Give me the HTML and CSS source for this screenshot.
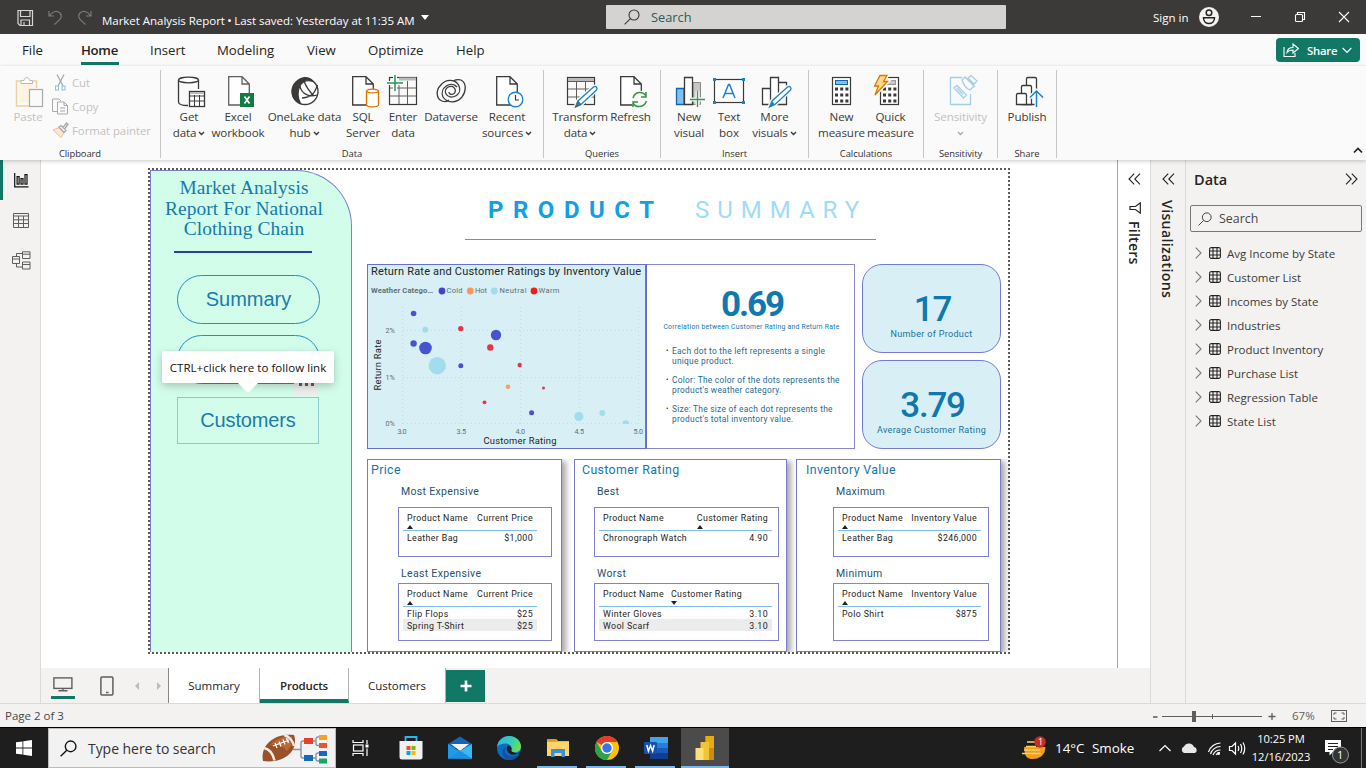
FILE: index.html
```html
<!DOCTYPE html>
<html lang="en">
<head>
<meta charset="utf-8">
<title>Market Analysis Report</title>
<link rel="stylesheet" href="styles.css">
</head>
<body>
<svg class="defs" width="0" height="0">
  <defs>
    <symbol id="doc" viewBox="0 0 22 30"><path d="M.7 .7H14L21.3 8V29H.7ZM14 .7V8H21.3" fill="#fff" stroke="#3b3a39" stroke-width="1.3"/></symbol>
    <symbol id="tbl" viewBox="0 0 12 12"><rect x=".6" y=".6" width="10.8" height="10.8" rx="1.6"/><path d="M.6 4H11.4M.6 8H11.4M4 .6V11.4M8 .6V11.4"/></symbol>
    <symbol id="chev" viewBox="0 0 7 12"><path d="M.7 .7L6 6L.7 11.3"/></symbol>
    <symbol id="dbl" viewBox="0 0 13 12"><path d="M6.2 .7L1 6L6.2 11.3M12 .7L6.8 6L12 11.3"/></symbol>
    <symbol id="lens" viewBox="0 0 16 16"><circle cx="10" cy="6" r="5"/><path d="M6.4 9.6L.6 15.4"/></symbol>
    <symbol id="down" viewBox="0 0 7 5"><path d="M1 1L3.5 3.5L6 1"/></symbol>
  </defs>
</svg>
<div class="app">
  <header class="titlebar">
    <svg class="quick" width="84" height="20" viewBox="14 7 84 20" fill="none">
      <path d="M18 10.500H32.500V25.500H20L18 23.500ZM20.500 10.500V16.500H30V10.500M21 25V20H29.500V25M24 22V25" stroke="#d6d6d6" stroke-width="1.200"/>
      <path d="M49 11V16H54M49.500 16C53 10.500 57 10.500 60 13C63 16.500 61 19 54.500 24.500" stroke="#7b7a79" stroke-width="1.200"/>
      <path d="M91 11V16H86M90.500 16C87 10.500 83 10.500 80 13C77 16.500 79 19 85.500 24.500" stroke="#7b7a79" stroke-width="1.200"/>
    </svg>
    <span class="doc-name">Market Analysis Report <b>•</b> Last saved: Yesterday at 11:35 AM</span>
    <i class="caret"></i>
    <div class="top-search"><svg class="ico-line" width="16" height="16"><use href="#lens"/></svg><span>Search</span></div>
    <span class="signin">Sign in</span>
    <svg class="user" width="20" height="20" viewBox="0 0 20 20"><circle cx="10" cy="10" r="10" fill="#f3f2f1"/><g fill="none" stroke="#222" stroke-width="1.500"><circle cx="10" cy="5.700" r="2.800"/><path d="M4.500 10.800H15.500C15.500 18.500 4.500 18.500 4.500 10.800Z"/></g></svg>
    <svg class="winbtns" width="104" height="14" viewBox="1248 11 104 14" fill="none" stroke="#fff" stroke-width="1.100"><path d="M1251 17.500H1261M1339 13L1349 23M1349 13L1339 23"/><rect x="1295.500" y="15.500" width="7" height="7" rx="1"/><path d="M1297.500 15V13.500H1304.500V20.500H1303"/></svg>
  </header>

  <nav class="menu">
    <span class="m-file">File</span><span class="m-home active">Home</span><span class="m-insert">Insert</span><span class="m-model">Modeling</span><span class="m-view">View</span><span class="m-opt">Optimize</span><span class="m-help">Help</span>
    <button class="share"><svg width="16" height="16" viewBox="0 0 16 16" fill="none" stroke="#fff" stroke-width="1.100"><path d="M1 5V14.500H12V11M4 10.500C4.500 6.500 7 5.500 10 5.500V2L15.500 6.500L10 11V8C7 8 5.500 8.500 4 10.500Z"/></svg>Share<svg width="10" height="7" viewBox="0 0 10 7" fill="none" stroke="#fff" stroke-width="1.200"><path d="M.7 1L5 5.500L9.300 1"/></svg></button>
  </nav>

  <section class="ribbon">
    <div class="group g-clip">
      <div class="items">
        <div class="btn off paste"><svg width="38" height="36" viewBox="10 74 38 36" fill="none"><path d="M22 81H17.500V106H30M34 81H37.500V88" stroke="#f0cfa0" stroke-width="1.500"/><path d="M20.500 83H34.500V89H30V103H20.500Z" fill="#fcf3e0"/><path d="M22 83.500V80.500H25C25.500 76.500 30 76.500 30.500 80.500H33.500V83.500Z" fill="#fff" stroke="#b9b9b9"/><rect x="30.500" y="89.500" width="13" height="17" fill="#fafafa" stroke="#a9a9a9" stroke-width="1.200"/></svg><span>Paste</span></div>
        <div class="clip-list off">
          <div><svg width="17" height="17" viewBox="0 0 17 17" fill="none" stroke="#a9a9a9"><path d="M5 .5L11 12M12 .5L6 12" stroke-width="1.300"/><rect x="3.500" y="12" width="3" height="4" stroke="#8cc1e4"/><rect x="10" y="12" width="3" height="4" stroke="#8cc1e4"/></svg>Cut</div>
          <div><svg width="17" height="17" viewBox="0 0 17 17" fill="none" stroke="#a9a9a9"><path d="M5 13.500H.5V1H7L9 3M5.500 4H12L15.500 7.500V16H5.500ZM12 4V7.500H15.500M8 10H13M8 13H13"/></svg>Copy</div>
          <div><svg width="17" height="17" viewBox="0 0 17 17" fill="none" stroke="#a9a9a9"><path d="M1 8L7 5.500L12 11L9 15.500Z" fill="#fbe6cd" stroke="#eac196"/><path d="M7 5L9 3.500L14 8.500L12 10.500ZM11 5.500L14.500 1L16 2.500L12.500 7" stroke-width="1.300"/></svg>Format painter</div>
        </div>
      </div>
      <div class="cap">Clipboard</div>
    </div>

    <div class="group g-data">
      <div class="items">
        <div class="btn" style="width:42px"><svg width="38" height="36" viewBox="170 74 38 36" fill="none" stroke="#3b3a39" stroke-width="1.300"><path d="M178.500 80V102C178.500 104 182 105.500 188 105.500M198.500 80V89"/><ellipse cx="188.500" cy="80" rx="10" ry="2.800" fill="#fff"/><rect x="189.500" y="91.500" width="15" height="15" fill="#fff"/><path d="M190 93H204" stroke="#bbb" stroke-width="2"/><path d="M189.500 96H204.500M189.500 101H204.500M194.500 95V106M199.500 95V106" stroke-width="1"/></svg><span>Get<br>data<svg class="dn" width="7" height="5"><use href="#down"/></svg></span></div>
        <div class="btn" style="width:56px"><svg width="38" height="36" viewBox="219 74 38 36"><use href="#doc" x="228" y="76" width="22" height="30" opacity=".8"/><rect x="240" y="93" width="14" height="14" fill="#107c41"/><path d="M244.500 96.500L249.500 103.500M249.500 96.500L244.500 103.500" stroke="#fff" stroke-width="1.700"/></svg><span>Excel<br>workbook</span></div>
        <div class="btn" style="width:77px"><svg width="38" height="36" viewBox="286 74 38 36" fill="none" stroke="#3b3a39" stroke-width="1.300"><circle cx="305" cy="91.500" r="13" fill="#fff"/><path d="M297 81.500C302 76.500 309 76.500 313 81.500C306 79 302 82 299.500 86.500C297 93 298 99 300.500 103.500C291.500 100 289.500 89 297 81.500Z" fill="#3b3a39"/><path d="M300 86C301 92 307 98 317 95M304 81C306 87 309 91 314 96M317.500 85C315 92 313 97 302 98"/></svg><span>OneLake data<br>hub<svg class="dn" width="7" height="5"><use href="#down"/></svg></span></div>
        <div class="btn" style="width:40px"><svg width="38" height="36" viewBox="344 74 38 36"><use href="#doc" x="352" y="76" width="22" height="30"/><path d="M366.500 91V105C368 107.500 377 107.500 378.500 105V91C377 88.500 368 88.500 366.500 91C368 93.500 377 93.500 378.500 91" fill="#fff" stroke="#db7500" stroke-width="1.400"/></svg><span>SQL<br>Server</span></div>
        <div class="btn" style="width:40px"><svg width="38" height="36" viewBox="384 74 38 36" fill="none" stroke="#605e5c"><rect x="389.500" y="77.500" width="27" height="27" stroke="#3b3a39" stroke-width="1.200"/><path d="M399 79H416" stroke="#bbb" stroke-width="3"/><path d="M390 88H416M390 96H416M399 81V104M407.500 81V104"/><path d="M387 83H403M395 75V91" stroke="#fff" stroke-width="4"/><path d="M387 83H403M395 75V91" stroke="#1f9b51" stroke-width="1.500"/></svg><span>Enter<br>data</span></div>
        <div class="btn" style="width:56px"><svg width="38" height="36" viewBox="432 74 38 36" fill="none" stroke="#3b3a39" stroke-width="1.300"><path d="M442 101C436 99 436 90 440 86C446 78 456 79 459 86C463 95 450 101 446 94C443 88 452 83 455 89C457 95 449 96 449 92M461 80C467 83 466 92 462 97C456 104 447 103 443 97C439 88 451 80 457 87M442 101C445 102 448 101 449 100M461 80C458 79 455 80 453 81"/></svg><span>Dataverse</span></div>
        <div class="btn" style="width:56px"><svg width="38" height="36" viewBox="488 74 38 36"><use href="#doc" x="496" y="76" width="22" height="30"/><circle cx="515.500" cy="99.500" r="7.300" fill="#fff" stroke="#1b83cb" stroke-width="1.400"/><path d="M515.500 95V100H519" fill="none" stroke="#3b3a39" stroke-width="1.200"/></svg><span>Recent<br>sources<svg class="dn" width="7" height="5"><use href="#down"/></svg></span></div>
      </div>
      <div class="cap">Data</div>
    </div>

    <div class="group g-query">
      <div class="items">
        <div class="btn" style="width:58px"><svg width="38" height="36" viewBox="561 74 38 36" fill="none" stroke="#605e5c"><rect x="567.500" y="77.500" width="27" height="27" stroke="#3b3a39" stroke-width="1.200"/><path d="M568 79.500H594" stroke="#bbb" stroke-width="3"/><path d="M568 81.500H594M568 89H594M568 97H594M576.500 82V104M585.500 82V104"/><path d="M575.500 107L578 101L593.500 87C596 85.500 598 88 596.500 90L581 104.500Z" fill="#fff" stroke="#fafafa" stroke-width="4"/><path d="M575.500 107L578 101L593.500 87C596 85.500 598 88 596.500 90L581 104.500Z" fill="#fff" stroke="#1b83cb" stroke-width="1.300"/><path d="M575.500 107L578 101L581 104.500Z" fill="#1b83cb"/></svg><span>Transform<br>data<svg class="dn" width="7" height="5"><use href="#down"/></svg></span></div>
        <div class="btn" style="width:43px"><svg width="38" height="36" viewBox="611 74 38 36" fill="none"><use href="#doc" x="619" y="76" width="22" height="30"/><circle cx="638.500" cy="99.500" r="9" fill="#fafafa"/><path d="M632 98C634 91 642 91 645 96M645 92V97H640M645.500 101C643 108 635 108 632 103M632 107V102H637" stroke="#37914c" stroke-width="1.500"/></svg><span>Refresh</span></div>
      </div>
      <div class="cap">Queries</div>
    </div>

    <div class="group g-insert">
      <div class="items">
        <div class="btn" style="width:40px"><svg width="38" height="36" viewBox="670 74 38 36" fill="none"><path d="M676.500 88.500H684V104.500H676.500Z" fill="#83beec" stroke="#1064b0" stroke-width="1.300"/><path d="M693 82.500H700.500V104.500H693Z" fill="#c8c6c4" stroke="#8a8886"/><path d="M684.500 77.500H692.500V104.500H684.500Z" fill="#fff" stroke="#3b3a39" stroke-width="1.300"/><path d="M697.500 91V107M690 99.500H705" stroke="#fafafa" stroke-width="4"/><path d="M697.500 91V107M690 99.500H705" stroke="#2f9a50" stroke-width="1.300"/></svg><span>New<br>visual</span></div>
        <div class="btn" style="width:40px"><svg width="38" height="36" viewBox="710 74 38 36" fill="none"><rect x="714.500" y="79.500" width="29" height="23" fill="#fff" stroke="#3b3a39" stroke-width="1.200"/><path d="M713 78h3v3h-3zM742 78h3v3h-3zM713 101h3v3h-3zM742 101h3v3h-3z" fill="#1b83cb"/><path d="M723 98L728.500 84.500H729.500L735 98M725 93.500H733" stroke="#1b83cb" stroke-width="1.500"/></svg><span>Text<br>box</span></div>
        <div class="btn" style="width:51px"><svg width="38" height="36" viewBox="755 74 38 36" fill="none" stroke="#3b3a39" stroke-width="1.300"><path d="M761.500 88.500H769.500V104.500H761.500ZM777.500 82.500H785.500V104.500H777.500ZM769.500 77.500H777.500V104.500H769.500Z" fill="#fff"/><path d="M768.500 107L771 101L786.500 87C789 85.500 791 88 789.500 90L774 104.500Z" fill="#fff" stroke="#fafafa" stroke-width="4"/><path d="M768.500 107L771 101L786.500 87C789 85.500 791 88 789.500 90L774 104.500Z" fill="#fff" stroke="#1b83cb"/><path d="M768.500 107L771 101L774 104.500Z" fill="#1b83cb" stroke="none"/></svg><span>More<br>visuals<svg class="dn" width="7" height="5"><use href="#down"/></svg></span></div>
      </div>
      <div class="cap">Insert</div>
    </div>

    <div class="group g-calc">
      <div class="items">
        <div class="btn" style="width:49px"><svg width="38" height="36" viewBox="822 74 38 36"><rect x="831.500" y="77.500" width="18" height="27" fill="#fff" stroke="#3b3a39" stroke-width="1.200"/><rect x="834.500" y="80.500" width="12" height="4" fill="#83beec" stroke="#1064b0"/><path d="M834 89H848M834 95H848M834 101H848" stroke="#3b3a39" stroke-width="3" stroke-dasharray="3 2.200"/></svg><span>New<br>measure</span></div>
        <div class="btn" style="width:49px"><svg width="38" height="36" viewBox="872 74 38 36"><rect x="880.500" y="77.500" width="18" height="27" fill="#fff" stroke="#3b3a39" stroke-width="1.200"/><rect x="885.500" y="80.500" width="10" height="4" fill="#c8c6c4" stroke="#999"/><path d="M883 89H897M883 95H897M883 101H897" stroke="#3b3a39" stroke-width="3" stroke-dasharray="3 2.200"/><path d="M880 75.500H887L883.500 81.500H887.500L875 95L878.500 86H874.500Z" fill="#ffd55f" stroke="#fafafa" stroke-width="4"/><path d="M880 75.500H887L883.500 81.500H887.500L875 95L878.500 86H874.500Z" fill="#ffd88a" stroke="#d97a00" stroke-width="1.300"/></svg><span>Quick<br>measure</span></div>
      </div>
      <div class="cap">Calculations</div>
    </div>

    <div class="group g-sens">
      <div class="items">
        <div class="btn off" style="width:73px"><svg width="38" height="36" viewBox="941 74 38 36" fill="none" stroke="#a5cfe8" stroke-width="1.300"><path d="M961 77.500H949.500V104.500H969.500V94"/><path d="M953 88L956 85.500L965.500 95L962.500 98ZM956 88L962 94.500M961 80L964 77L973 86L969 90C966 89 963 86 961 80ZM967 78L970 75.500L976 81L973 84ZM965 78L974 87"/></svg><span>Sensitivity<br><svg class="dn" width="7" height="5"><use href="#down"/></svg></span></div>
      </div>
      <div class="cap">Sensitivity</div>
    </div>

    <div class="group g-share">
      <div class="items">
        <div class="btn" style="width:58px"><svg width="38" height="36" viewBox="1008 74 38 36" fill="#fff" stroke="#3b3a39" stroke-width="1.300"><path d="M1026.500 104.500V79Q1026.500 77.500 1028 77.500H1035Q1036.500 77.500 1036.500 79V104.500Z"/><path d="M1021.500 104.500V87Q1021.500 85.500 1023 85.500H1030Q1031.500 85.500 1031.500 87V104.500Z"/><path d="M1016.500 104.500V95Q1016.500 93.500 1018 93.500H1025Q1026.500 93.500 1026.500 95V104.500Z"/><path d="M1036.500 107V92M1030 97.500L1036.500 91L1043 97.500" fill="none" stroke="#fafafa" stroke-width="4"/><path d="M1036.500 107V92M1030 97.500L1036.500 91L1043 97.500" fill="none" stroke="#1b83cb" stroke-width="1.500"/></svg><span>Publish</span></div>
      </div>
      <div class="cap">Share</div>
    </div>
    <svg class="collapse" width="10" height="7" viewBox="0 0 10 7" fill="none" stroke="#222" stroke-width="1.700"><path d="M1 5.500L5 1.500L9 5.500"/></svg>
  </section>

  <div class="body">
    <aside class="rail">
      <div class="rail-on"><svg width="15" height="15" viewBox="0 0 15 15" fill="none" stroke="#111" stroke-width="1.200"><path d="M.7 0V13.800H14.500"/><rect x="3.100" y="3.600" width="2" height="7.500"/><rect x="7" y="5.600" width="2" height="5.500"/><rect x="11" y="1.600" width="2" height="9.500"/></svg></div>
      <div><svg width="16" height="15" viewBox="0 0 16 15" fill="none" stroke="#605e5c"><path d="M.5 .5H15.500V14.500H.5ZM.5 3H15.500M.5 6.800H15.500M.5 10.500H15.500M5.500 3V14.500M10.500 3V14.500"/></svg></div>
      <div><svg width="19" height="19" viewBox="0 0 19 19" fill="none" stroke="#605e5c"><path d="M.5 5.500H7.500V12.500H.5ZM.5 8H7.500M10.500 .8H18V7.500H10.500ZM10.500 3.200H18M10.500 11H18V18H10.500ZM10.500 13.500H18M4.500 5.500V2.500H10.500M4.500 12.500V16H10.500"/></svg></div>
    </aside>

    <div class="center">
      <div class="stage">
        <div class="workspace">
          <div class="report">
            <div class="side">
              <h1>Market Analysis<br>Report For National<br>Clothing Chain</h1>
              <div class="rule"></div>
              <div class="pill">Summary</div>
              <div class="pill"></div>
              <div class="pill square">Customers
                <svg class="more" width="24" height="21" viewBox="0 0 24 21" fill="#605e5c"><path d="M5 8h3v3H5zM11 8h3v3h-3zM17 8h3v3h-3z"/></svg>
                <div class="tip">CTRL+click here to follow link</div>
              </div>
            </div>
            <div class="main">
              <div class="heading"><b>PRODUCT</b><span>SUMMARY</span></div>
              <div class="row-top">
                <svg class="chart" width="280" height="185" viewBox="367 264 280 185">
                  <rect x="367.500" y="264.500" width="278.500" height="184" fill="#d7eff5" stroke="#6670cc"/>
                  <path d="M646 264V449" stroke="#6670cc" stroke-width="2"/>
                  <g class="t-title"><text x="371" y="275" textLength="270">Return Rate and Customer Ratings by Inventory Value</text></g>
                  <g class="t-legend">
                    <text x="371" y="293" font-weight="bold" textLength="62">Weather Catego…</text>
                    <text x="446.500" y="293" textLength="16">Cold</text><text x="475" y="293" textLength="12">Hot</text><text x="499.500" y="293" textLength="27">Neutral</text><text x="538.500" y="293" textLength="21">Warm</text>
                  </g>
                  <circle cx="442" cy="291" r="3.400" fill="#3f46cf"/><circle cx="470.300" cy="291" r="3.400" fill="#fd9650"/><circle cx="494.300" cy="291" r="3.400" fill="#a0dcea"/><circle cx="534" cy="291" r="3.400" fill="#ee1c25"/>
                  <g stroke="#bfdce3" stroke-dasharray="1 3"><path d="M402.500 307V424M461.500 307V424M520.500 307V424M579.500 307V424M638.500 307V424M403 330.500H638M403 377.500H638M403 423.500H638"/></g>
                  <g class="t-axis">
                    <text x="385.500" y="333">2%</text><text x="385.500" y="380">1%</text><text x="385.500" y="426">0%</text>
                    <text x="397.500" y="434" textLength="9">3.0</text><text x="456.500" y="434" textLength="9.500">3.5</text><text x="515.500" y="434" textLength="9.500">4.0</text><text x="574.500" y="434" textLength="9.500">4.5</text><text x="633.500" y="434" textLength="9.500">5.0</text>
                  </g>
                  <g class="t-label"><text x="483.500" y="444" textLength="73">Customer Rating</text><text transform="translate(380.500 390.500) rotate(-90)" textLength="51">Return Rate</text></g>
                  <g fill="#4853d2"><circle cx="413.600" cy="313.500" r="2.800"/><circle cx="413.600" cy="343.500" r="3.200"/><circle cx="425.500" cy="348" r="6.300"/><circle cx="460.800" cy="365.700" r="2.500"/><circle cx="496" cy="335" r="5.200"/><circle cx="531.600" cy="412.700" r="2.500"/></g>
                  <g fill="#e83340"><circle cx="460.800" cy="328.600" r="2.700"/><circle cx="490.300" cy="347.500" r="3.200"/><circle cx="519.700" cy="365" r="2.200"/><circle cx="543.500" cy="388" r="1.500"/><circle cx="484.500" cy="402.300" r="1.900"/></g>
                  <circle cx="508" cy="386.700" r="2.300" fill="#f6a069"/>
                  <g fill="#a2dded"><circle cx="425.300" cy="329.700" r="3"/><circle cx="437.300" cy="365.700" r="8.700"/><circle cx="578.800" cy="416.500" r="4.600"/><circle cx="602.300" cy="413" r="2.900"/><path d="M622.500 424A3.300 3.300 0 1 1 629 424Z"/></g>
                </svg>
                <div class="info">
                  <div class="num">0.69</div>
                  <div class="corr">Correlation between Customer Rating and Return Rate</div>
                  <ul>
                    <li>Each dot to the left represents a single<br>unique product.</li>
                    <li>Color: The color of the dots represents the<br>product's weather category.</li>
                    <li>Size: The size of each dot represents the<br>product's total inventory value.</li>
                  </ul>
                </div>
                <div class="cards">
                  <div class="card"><div class="num wide">17</div><div class="lbl">Number of Product</div></div>
                  <div class="card"><div class="num wide">3.79</div><div class="lbl">Average Customer Rating</div></div>
                </div>
              </div>
              <div class="row-bottom">
                <div class="panel p-price">
                  <h2>Price</h2>
                  <h3>Most Expensive</h3>
                  <div class="tbox"><div class="th"><span class="up">Product Name</span><span>Current Price</span></div><div class="tr"><span>Leather Bag</span><span>$1,000</span></div></div>
                  <h3>Least Expensive</h3>
                  <div class="tbox tall"><div class="th"><span class="up">Product Name</span><span>Current Price</span></div><div class="tr"><span>Flip Flops</span><span>$25</span></div><div class="tr alt"><span>Spring T-Shirt</span><span>$25</span></div></div>
                </div>
                <div class="panel p-rating">
                  <h2>Customer Rating</h2>
                  <h3>Best</h3>
                  <div class="tbox"><div class="th"><span>Product Name</span><span class="up">Customer Rating</span></div><div class="tr"><span>Chronograph Watch</span><span>4.90</span></div></div>
                  <h3>Worst</h3>
                  <div class="tbox tall near"><div class="th"><span>Product Name</span><span class="dwn">Customer Rating</span></div><div class="tr"><span>Winter Gloves</span><span>3.10</span></div><div class="tr alt"><span>Wool Scarf</span><span>3.10</span></div></div>
                </div>
                <div class="panel p-inv">
                  <h2>Inventory Value</h2>
                  <h3>Maximum</h3>
                  <div class="tbox"><div class="th"><span class="up">Product Name</span><span>Inventory Value</span></div><div class="tr"><span>Leather Bag</span><span>$246,000</span></div></div>
                  <h3>Minimum</h3>
                  <div class="tbox tall"><div class="th"><span class="up">Product Name</span><span>Inventory Value</span></div><div class="tr"><span>Polo Shirt</span><span>$875</span></div></div>
                </div>
              </div>
            </div>
          </div>
        </div>
        <aside class="filters">
          <svg class="ico-line dark" width="13" height="12"><use href="#dbl"/></svg>
          <svg class="funnel" width="12" height="12" viewBox="0 0 12 12" fill="none" stroke="#252423" stroke-width="1.200"><path d="M11.300 .8V11.200L6.500 7.500H1V4.500H6.500Z"/></svg>
          <span>Filters</span>
        </aside>
      </div>
      <div class="pages">
        <div class="device on"><svg width="20" height="15" viewBox="0 0 20 15" fill="none" stroke="#605e5c" stroke-width="1.400"><rect x=".9" y=".9" width="18" height="10.500"/><path d="M10 11.500V13.500M5.500 13.800H14.500"/></svg></div>
        <div class="device"><svg width="14" height="20" viewBox="0 0 14 20" fill="none" stroke="#605e5c" stroke-width="1.500"><rect x=".9" y=".9" width="12" height="18.200" rx="1"/><path d="M6 16.500H8.500"/></svg></div>
        <svg class="steps" width="30" height="10" viewBox="0 0 30 10" fill="#bdbbb9"><path d="M6 1V9L2 5ZM24 1V9L28 5Z"/></svg>
        <div class="tab t1">Summary</div><div class="tab t2">Products</div><div class="tab t3">Customers</div><div class="add"><svg width="12" height="12" viewBox="0 0 12 12"><path d="M6 .5V11.500M.5 6H11.500" stroke="#fff" stroke-width="2.600"/></svg></div>
      </div>
    </div>

    <aside class="viz">
      <svg class="ico-line dark" width="13" height="12"><use href="#dbl"/></svg>
      <span>Visualizations</span>
    </aside>

    <aside class="data">
      <div class="data-head"><b>Data</b><svg class="ico-line dark flip" width="13" height="12"><use href="#dbl"/></svg></div>
      <div class="data-search"><svg class="ico-line" width="14" height="14"><use href="#lens"/></svg>Search</div>
      <ul>
        <li><svg class="ar" width="7" height="12"><use href="#chev"/></svg><svg class="tb" width="12" height="12"><use href="#tbl"/></svg><span>Avg Income by State</span></li>
        <li><svg class="ar" width="7" height="12"><use href="#chev"/></svg><svg class="tb" width="12" height="12"><use href="#tbl"/></svg><span>Customer List</span></li>
        <li><svg class="ar" width="7" height="12"><use href="#chev"/></svg><svg class="tb" width="12" height="12"><use href="#tbl"/></svg><span>Incomes by State</span></li>
        <li><svg class="ar" width="7" height="12"><use href="#chev"/></svg><svg class="tb" width="12" height="12"><use href="#tbl"/></svg><span>Industries</span></li>
        <li><svg class="ar" width="7" height="12"><use href="#chev"/></svg><svg class="tb" width="12" height="12"><use href="#tbl"/></svg><span>Product Inventory</span></li>
        <li><svg class="ar" width="7" height="12"><use href="#chev"/></svg><svg class="tb" width="12" height="12"><use href="#tbl"/></svg><span>Purchase List</span></li>
        <li><svg class="ar" width="7" height="12"><use href="#chev"/></svg><svg class="tb" width="12" height="12"><use href="#tbl"/></svg><span>Regression Table</span></li>
        <li><svg class="ar" width="7" height="12"><use href="#chev"/></svg><svg class="tb" width="12" height="12"><use href="#tbl"/></svg><span>State List</span></li>
      </ul>
    </aside>
  </div>

  <footer class="status">
    <span class="pg">Page 2 of 3</span>
    <svg class="zoomer" width="124" height="14" viewBox="1152 708 124 14" stroke="#605e5c"><path d="M1153 716H1157.500" stroke-width="1.600"/><path d="M1162 715.500H1262"/><path d="M1194 710V721" stroke-width="4"/><path d="M1212.500 713V718"/><path d="M1268.500 715.500H1275.500M1272 712V719" stroke-width="1.300"/></svg>
    <span class="pct">67%</span>
    <svg width="16" height="12" viewBox="0 0 16 12" fill="none" stroke="#605e5c"><rect x=".5" y=".5" width="15" height="11"/><path d="M3 5V3H5.500M10.500 3H13V5M13 7V9H10.500M5.500 9H3V7"/></svg>
  </footer>

  <footer class="taskbar">
    <div class="start"><svg width="16" height="16" viewBox="0 0 16 16" fill="#fff"><path d="M0 2.300L6.500 1.400V7.600H0ZM7.300 1.300L16 0V7.600H7.300ZM0 8.400H6.500V14.600L0 13.700ZM7.300 8.400H16V16L7.300 14.700Z"/></svg></div>
    <div class="tsearch"><svg class="ico-line black" width="17" height="17"><use href="#lens"/></svg><span>Type here to search</span>
      <svg width="67" height="32" viewBox="261 731 67 32" fill="none"><path d="M293 748.500H301M308 740H303Q301 740 301 742V755Q301 757 303 757H308M312 740H316M320 736H318Q316 736 316 738V743Q316 744.500 318 744.500H320M312 757H316M320 752H318Q316 752 316 754V758Q316 760 318 760H320" stroke="#8a94a3" stroke-width="1.400"/>
        <path d="M263 760C260 746 272 732 294 734C299 748 286 763 263 760Z" fill="#9a5128"/><path d="M270 744C276 737 285 735 292 735.500C294 741 291 746 287 750C282 744 276 742 270 744Z" fill="#b96a38"/><path d="M264 747C269 748 273 753 274.500 759.500M284 734C289 735 293 740 294 745" stroke="#f0e8e4" stroke-width="2.500"/><path d="M273 745L289 739M275 742L277 747M279 740.500L281 745.500M283 738.500L285 743.500M286.500 737L288.500 742" stroke="#fff" stroke-width="1.300"/>
        <rect x="304" y="737" width="9" height="6" fill="#e8402a"/><rect x="304" y="754" width="9" height="6" fill="#1368c4"/><rect x="319" y="734" width="8" height="5" fill="#f2a31b"/><rect x="319" y="742" width="8" height="5" fill="#ea5236"/><rect x="319" y="750" width="8" height="5" fill="#1368c4"/><rect x="319" y="757.500" width="8" height="5" fill="#16a56a"/></svg>
    </div>
    <div class="app-ico"><svg width="18" height="16" viewBox="0 0 18 16" fill="none" stroke="#fff" stroke-width="1.200"><path d="M1 0V2.500H11V0M1 16V13.500H11V16"/><rect x="1.500" y="5" width="9.500" height="6"/><path d="M15 0V4M15 8.500V16"/><path d="M13.500 4.500H16.500V7.500H13.500Z" fill="#fff" stroke="none"/></svg></div>
    <div class="app-ico g2"><svg width="24" height="24" viewBox="0 0 24 24"><path d="M6.500 5V1H17.500V5" fill="none" stroke="#32b4ec" stroke-width="1.800"/><path d="M.5 5H23.500V21Q23.500 23.500 21 23.500H3Q.5 23.500 .5 21Z" fill="#f1f1f1"/><path fill="#f25022" d="M7.500 10h4v4h-4z"/><path fill="#7fba00" d="M12.500 10h4v4h-4z"/><path fill="#00a4ef" d="M7.500 15h4v4h-4z"/><path fill="#ffb900" d="M12.500 15h4v4h-4z"/></svg></div>
    <div class="app-ico"><svg width="24" height="24" viewBox="0 0 24 24"><path d="M0 8L12 .5L24 8V12H0Z" fill="#1267b5"/><path d="M3 8H21L12 15Z" fill="#f3f3f3"/><path d="M0 8L24 22.500H0Z" fill="#2299e8"/><path d="M24 8V22.500L0 22L12 14.800Z" fill="#38b9f2"/><path d="M12 14.800L24 22.500H0L0 22Z" fill="#1c90e4"/></svg></div>
    <div class="app-ico"><svg width="24" height="24" viewBox="0 0 24 24"><defs><linearGradient id="eg" x1="0" x2="1" y1=".2" y2=".5"><stop stop-color="#2fb4ec"/><stop offset=".6" stop-color="#37cdb4"/><stop offset="1" stop-color="#6be04c"/></linearGradient></defs><circle cx="12" cy="12" r="12" fill="#0b6cc6"/><path d="M0 11C1 4 6 0 12 0C20 0 24 6 24 10.500C24 15 20 16.500 17 16.500C14.500 16.500 13.500 15.500 14.500 13.500C15.500 10 12 7.500 8.500 7.500C5 7.500 1.500 9 0 11Z" fill="url(#eg)"/><path d="M9.500 11C5 16 11 22 18 19.800C19.800 19.300 21.500 18.300 23 17C21 21 17 24 12 24C7 23 5 19 5.500 15C6 12 7.500 11 9.500 11Z" fill="#1551a0"/><path d="M11 9.500C9 11 9 16 14 18.500C17 19.500 21 18 24 15V17L23 18C17 16.500 13.500 16 14.500 13.500C15 11.500 13 9 11 9.500Z" fill="#1e1e1e"/></svg></div>
    <div class="app-ico run"><svg width="24" height="24" viewBox="0 0 24 24"><path d="M1 3H10L12 5H23V20H1Z" fill="#f5b62a"/><path d="M1 6H23V20H1Z" fill="#fdd568"/><path d="M1 3H10V5.500H1Z" fill="#e39b0c"/><path d="M5 21V13H19V21H15.500V17H8.500V21Z" fill="#3a8fd6"/></svg></div>
    <div class="app-ico run"><svg width="24" height="24" viewBox="0 0 24 24"><circle cx="12" cy="12" r="12" fill="#fbc116"/><path d="M1.600 6A12 12 0 0 1 22.400 6H12A6 6 0 0 0 6.800 9Z" fill="#e33b2e" /><path d="M1.600 6A12 12 0 0 0 12 24L17.200 15A6 6 0 0 1 6.800 15Z" fill="#2da14c"/><circle cx="12" cy="12" r="6" fill="#fff"/><circle cx="12" cy="12" r="4.700" fill="#3477e8"/></svg></div>
    <div class="app-ico run"><svg width="24" height="24" viewBox="0 0 24 24"><path fill="#41a5ee" d="M6 1H24V7H6z"/><path fill="#2b7cd3" d="M6 7H24V12H6z"/><path fill="#185abd" d="M6 12H24V17H6z"/><path fill="#103f91" d="M6 17H24V23H6z"/><rect y="6" width="13" height="12" rx="1" fill="#1851ad"/><path d="M2.800 9L4.400 15L6.500 9.500L8.600 15L10.200 9" fill="none" stroke="#fff" stroke-width="1.500"/></svg></div>
    <div class="app-ico run cur"><svg width="24" height="24" viewBox="0 0 24 24"><path fill="#d18b0e" d="M12.500 0H21V24H12.500z"/><path fill="#e6ad10" d="M12.500 0H21V12H12.500z"/><path fill="#f0c434" d="M7.500 6H16V24H7.500z"/><path fill="#f9e07a" d="M2.500 12H10.500V24H2.500z"/></svg></div>
    <div class="tray">
      <svg class="wx" width="26" height="26" viewBox="1021 735 26 26" fill="none"><path d="M1024 747H1045.500C1045.500 756 1038 759 1033 759C1028 759 1026 757 1025 754Z" fill="#f29c22"/><path d="M1027 742H1036M1026 746.500H1036M1024 750H1040M1022 753.500H1041" stroke="#fbd768" stroke-width="1.600"/><circle cx="1040" cy="742" r="5.800" fill="#c62f22"/></svg>
      <span class="wxn">1</span>
      <span class="temp">14°C</span><span class="smoke">Smoke</span>
      <svg class="sys" width="90" height="18" viewBox="1157 739 90 18" fill="none" stroke="#fff" stroke-width="1.200"><path d="M1159.500 751L1165 745.500L1170.500 751"/><path d="M1184 753A3.500 3.500 0 0 1 1184 746.500A5.500 5.500 0 0 1 1194 747A3.200 3.200 0 0 1 1195 753Z" fill="#e8e8e8" stroke="none"/><path d="M1208.500 752A13 13 0 0 1 1220.500 743M1210.500 754A11 11 0 0 1 1220.500 746.500M1213 755A8 8 0 0 1 1220.500 750M1216 755A5 5 0 0 1 1220 752.500" /><circle cx="1218.500" cy="753.500" r="1.500" fill="#fff" stroke="none"/><path d="M1229.500 746.500H1232L1235.500 743V754L1232 750.500H1229.500ZM1238 746Q1239.500 748.500 1238 751M1240.500 744Q1243 748.500 1240.500 753M1243 742.500Q1246.500 748.500 1243 754.500"/></svg>
      <div class="clock">10:25 PM<br>12/16/2023</div>
      <div class="notif"><svg width="25" height="26" viewBox="0 0 25 26"><path d="M0 1H16V13H8L4.500 16.500V13H0Z" fill="#fff"/><path d="M3 4.500H13M3 7.500H13M3 10.500H8" stroke="#222"/><circle cx="15.500" cy="16" r="8" fill="#333" stroke="#999"/></svg><span>1</span></div>
    </div>
  </footer>
</div>
</body>
</html>
```
FILE: styles.css
```css
* { box-sizing: border-box; }
body { margin: 0; font-family: "Open Sans", "Noto Sans", sans-serif; font-size: 11.3px; color: #252423; }
h1, h2, h3, ul { margin: 0; padding: 0; font-weight: normal; list-style: none; }
svg { display: block; flex: none; }
.defs { position: absolute; }
.app { width: 1366px; height: 768px; display: flex; flex-direction: column; overflow: hidden; background: #fff; }
.ico-line { fill: none; stroke: #3b3a39; stroke-width: 1.1; }
.ico-line.dark { stroke: #252423; }
.ico-line.black { stroke: #111; stroke-width: 1.3; }

/* Title bar */
.titlebar { height: 34px; flex: none; background: #3b3a39; color: #fff; display: flex; align-items: center; padding-left: 14px; }
.doc-name { margin-left: 4px; width: 313px; padding-top: 7px; white-space: nowrap; font-size: 11.5px; letter-spacing: -.03px; }
.doc-name b { font-size: 9px; vertical-align: 1px; }
.caret { margin-left: 6px; border: 4px solid transparent; border-top: 5px solid #fff; border-bottom: 0; }
.top-search { margin-left: 177px; width: 400px; height: 24px; background: #d4d3d1; border-radius: 1px; display: flex; align-items: center; padding-left: 18px; gap: 11px; color: #2b5c50; font-size: 12.8px; }
.signin { margin-left: 147px; width: 46px; font-size: 11.5px; padding-top: 1px; }
.winbtns { margin-left: 29px; }

/* Menu */
.menu { height: 32px; flex: none; background: #fafafa; display: flex; align-items: center; font-size: 13.2px; padding-left: 22px; }
.menu > span { height: 30px; line-height: 31px; white-space: nowrap; }
.m-file { width: 59px; } .m-home { width: 38px; margin-right: 31px; } .m-insert { width: 67px; } .m-model { width: 90px; }
.m-view { width: 61px; } .m-opt { width: 88px; } .m-help { width: 60px; }
.menu .active { font-weight: 600; letter-spacing: -.3px; border-bottom: 3px solid #117865; }
.share { margin-left: 760px; width: 84px; height: 24px; padding: 0 0 0 7px; border: 0; border-radius: 4px; background: #117865; color: #fff; font: 600 11.3px "Open Sans", sans-serif; display: flex; align-items: center; gap: 5px; letter-spacing: -.2px; }
.share svg:first-child { margin-right: 3px; }

/* Ribbon */
.ribbon { height: 94px; flex: none; background: #fafafa; display: flex; padding-top: 4px; position: relative; z-index: 2; box-shadow: 0 1px 4px rgba(0,0,0,.22); }
.group { height: 88px; border-right: 1px solid #c9c7c5; display: flex; flex-direction: column; }
.items { height: 76px; flex: none; display: flex; padding-top: 4px; justify-content: center; }
.cap { flex: none; font-size: 9.4px; text-align: center; line-height: 15px; color: #323130; letter-spacing: -.05px; }
.btn { display: flex; flex-direction: column; align-items: center; text-align: center; line-height: 16px; white-space: nowrap; font-size: 11.6px; letter-spacing: -.1px; color: #3b3a39; }
.btn > svg { margin-bottom: -1px; }
.dn { display: inline-block; fill: none; stroke: #3b3a39; stroke-width: 1.4; margin-left: 2px; vertical-align: 1px; }
.off { color: #c3c1bf; }
.off .dn { stroke: #a9a9a9; margin: 0; }
.g-clip { width: 161px; } .g-data { width: 383px; } .g-query { width: 117px; } .g-insert { width: 148px; }
.g-calc { width: 115px; } .g-sens { width: 74px; } .g-share { width: 59px; }
.g-clip .items { justify-content: flex-start; padding-left: 9px; }
.g-data .items { justify-content: flex-start; padding-left: 7px; }
.g-query .items { justify-content: flex-start; padding-left: 7px; }
.g-calc .items { justify-content: flex-start; padding-left: 8px; }
.paste { width: 38px; }
.clip-list { margin-top: -4px; padding-left: 5px; font-size: 11.4px; letter-spacing: -.05px; }
.clip-list div { height: 24px; display: flex; align-items: center; gap: 3px; white-space: nowrap; }
.collapse { margin: 77px 0 0 296px; }

/* Body */
.body { height: 543px; flex: none; display: flex; }
.rail { width: 41px; background: #f3f2f1; border-right: 1px solid #dcdad8; }
.rail div { height: 40px; display: flex; align-items: center; padding-left: 13px; }
.rail div:last-child { padding-left: 12px; }
.rail .rail-on { border-left: 3px solid #117865; padding-left: 11px; }
.center { width: 1109px; display: flex; flex-direction: column; }
.stage { height: 508px; display: flex; }
.workspace { width: 1076px; padding: 8px 0 0 107px; }
.filters { width: 33px; border-left: 1px solid #a8a6a4; padding: 13px 0 0 10px; }
.filters span, .viz span { writing-mode: vertical-rl; font-weight: 600; font-size: 14.2px; letter-spacing: .2px; display: block; line-height: 16px; }
.funnel { margin: 17px 0 7px 1px; }
.viz { width: 36px; background: #f3f2f1; border-left: 1px solid #dcdad8; border-right: 1px solid #dcdad8; padding: 13px 0 0 11px; }
.viz span { margin-top: 15px; margin-left: -3px; letter-spacing: .3px; }
.filters span { margin-left: -2px; }
.data { width: 180px; background: #f3f2f1; }
.data-head { display: flex; justify-content: space-between; align-items: center; padding: 0 8px; height: 38px; font-size: 14.5px; }
.data-head b { font-weight: 600; }
.flip { transform: scaleX(-1); }
.data-search { margin: 7px 4px 8px; height: 27px; border: 1px solid #7a7876; border-radius: 2px; display: flex; align-items: center; gap: 7px; padding-left: 7px; font-size: 12.4px; color: #484644; }
.data li { height: 24px; display: flex; align-items: center; padding: 1px 0 0 9px; font-size: 11.5px; color: #3b3a39; }
.data li span { padding-top: 2px; }
.ar { fill: none; stroke: #7a7876; stroke-width: 1.1; margin-right: 7px; }
.tb { fill: none; stroke: #252423; stroke-width: 1.1; margin-right: 6px; }

/* Report page */
.report { width: 862px; height: 486px; border: 2px dotted #5c5a58; display: flex; font-family: Roboto, "Liberation Sans", sans-serif; }
.side { width: 202px; height: 482px; background: #d2fdea; border: 1px solid #7a80cc; border-bottom: 0; border-top-right-radius: 56px; text-align: center; padding: 7px 0 0 24px; }
.side h1 { width: 138px; margin: 0 0 11px; font: 19.4px/20.5px "Liberation Serif", serif; letter-spacing: .1px; color: #147aae; white-space: nowrap; display: flex; flex-direction: column; align-items: center; }
.rule { width: 138px; height: 2px; margin: 0 0 22px -1px; background: #2b3f9c; }
.pill { width: 143px; height: 49px; margin: 0 0 11px 2px; border: 1px solid #2492b8; border-radius: 25px; font: 20px/46px "Liberation Sans", sans-serif; color: #1c7bab; }
.pill.square { width: 142px; height: 47px; margin: 13px 0 0 2px; border-radius: 0; border-color: #8fcad0; line-height: 44px; position: relative; letter-spacing: -.15px; }
.more { position: absolute; right: 0; top: -23px; background: #eeeded; }
.tip { position: absolute; left: -16px; top: -47px; width: 172px; height: 32px; background: #fff; border-radius: 2px; box-shadow: 0 3px 9px rgba(0,0,0,.22); color: #111; font: 11.5px/33px "Open Sans", sans-serif; letter-spacing: .05px; }
.tip::after { content: ""; position: absolute; left: 76px; top: 32px; border: 10px solid transparent; border-top-color: #fff; border-bottom: 0; }

.main { width: 656px; padding: 1px 0 0 15px; }
.heading { margin-left: 98px; width: 411px; height: 69px; border-bottom: 1px solid #8580cf; padding: 25px 0 0 23px; font-size: 24px; line-height: 29px; white-space: nowrap; }
.heading b { color: #149fe4; letter-spacing: 9.5px; display: inline-block; width: 207px; font-weight: 700; }
.heading span { color: #a0dbf7; letter-spacing: 8px; }
.row-top { display: flex; margin-top: 24px; height: 185px; }
.t-title text { font-size: 11px; fill: #252423; }
.t-legend text { font-size: 7.6px; fill: #5f6f73; }
.t-axis text { font-size: 7.2px; fill: #5f6f73; }
.t-label text { font-size: 9.4px; fill: #252423; }
.info { width: 208px; border: 1px solid #8a89cf; border-left: 0; text-align: center; color: #1277ab; padding-top: 22px; }
.num { font-size: 35px; font-weight: 700; line-height: 35px; color: #0f78af; letter-spacing: -2.1px; padding-left: 3px; }
.corr { font-size: 6.8px; line-height: 8px; margin: 1px 0; letter-spacing: .26px; white-space: nowrap; padding-left: 2px; }
.info ul { text-align: left; padding-left: 25px; margin-top: 15px; }
.info li { font-size: 8.4px; line-height: 10px; letter-spacing: .26px; margin-bottom: 9px; white-space: nowrap; color: #266a90; }
.info li::before { content: "•"; float: left; margin-left: -6px; color: #222; font-size: 7px; }
.cards { margin-left: 7px; display: flex; flex-direction: column; gap: 7px; }
.card { width: 139px; height: 89px; border: 1px solid #747bd4; border-radius: 20px; background: #d7eff5; text-align: center; padding-top: 27px; }
.wide { font-weight: 500; letter-spacing: -1.2px; padding-left: 2px; }
.lbl { font-size: 9px; color: #1b709e; line-height: 11px; letter-spacing: .33px; white-space: nowrap; margin-top: 2px; }
.row-bottom { display: flex; margin-top: 10px; height: 193px; }
.panel { height: 193px; border: 1px solid #7a7ac8; background: #fff; box-shadow: 4px 2px 6px rgba(0,0,0,.35); clip-path: inset(0 -12px 0 0); }
.p-price { width: 195px; padding-left: 30px; } .p-rating { width: 213px; margin-left: 12px; padding-left: 19px; } .p-inv { width: 205px; margin-left: 9px; padding-left: 36px; }
.panel h2 { font-size: 12.4px; line-height: 20px; height: 21px; color: #1478ab; letter-spacing: .35px; white-space: nowrap; }
.p-price h2 { margin-left: -27px; } .p-rating h2 { margin-left: -12px; } .p-inv h2 { margin-left: -27px; }
.panel h3 { font-size: 10.5px; line-height: 21px; height: 26px; color: #1f5370; letter-spacing: .33px; margin-left: 3px; }
.tbox { border: 1px solid #8080d6; height: 50px; padding: 4px 0 0 4px; font-size: 8.8px; letter-spacing: .38px; color: #252423; white-space: nowrap; }
.tbox + h3 { margin-top: 6px; height: 20px; }
.tall { height: 58px; }
.p-price .tbox { width: 154px; padding-right: 14px; } .p-rating .tbox { width: 185px; padding-right: 6px; } .p-inv .tbox { width: 156px; padding-right: 7px; }
.th { height: 19px; display: flex; justify-content: space-between; padding: 0 4px; line-height: 13px; border-bottom: 1px solid #7fbdf5; }
.near .th { justify-content: flex-start; gap: 7px; }
.tr { display: flex; justify-content: space-between; padding: 0 4px; height: 12px; line-height: 14px; }
.alt { background: #ececec; }
.up::after, .dwn::after { content: ""; display: block; width: 0; border: 3.5px solid transparent; }
.up::after { border-bottom: 4px solid #222; border-top: 0; }
.dwn::after { border-top: 4px solid #222; border-bottom: 0; }

/* Page tabs */
.pages { height: 35px; background: #f3f2f1; display: flex; align-items: center; font-size: 11.5px; }
.device { margin: 0 0 0 11px; width: 24px; height: 32px; display: flex; justify-content: center; align-items: center; }
.device.on { margin-left: 10px; border-bottom: 3px solid #117865; height: 26px; }
.device + .device { margin-left: 19px; width: 26px; }
.steps { margin-left: 13px; }
.tab { height: 35px; line-height: 36px; background: #fff; text-align: center; border-right: 1px solid #b5b3b1; }
.t1 { width: 92px; border-left: 1px solid #8a8886; margin-left: 5px; } .t2 { width: 89px; font-weight: 600; border-bottom: 4px solid #117865; letter-spacing: -.2px; } .t3 { width: 97px; }
.add { width: 39px; height: 32px; background: #117865; display: flex; align-items: center; justify-content: center; }

/* Status bar */
.status { height: 24px; flex: none; background: #f3f2f1; border-top: 1px solid #dcdad8; display: flex; align-items: center; padding-left: 5px; color: #484644; font-size: 11.5px; }
.pg { width: 1147px; }
.pct { margin: 0 15px 0 16px; width: 24px; color: #605e5c; }

/* Taskbar */
.taskbar { height: 41px; flex: none; background: #1e1e1e; border-top: 1px solid #000; display: flex; color: #fff; }
.start { width: 48px; display: flex; align-items: center; justify-content: center; }
.tsearch { width: 288px; background: #f2f2f2; border: 1px solid #bbb; color: #333; display: flex; align-items: center; padding-left: 11px; font-size: 14px; }
.tsearch span { margin-left: 11px; width: 173px; letter-spacing: -.05px; white-space: nowrap; }
.app-ico { width: 49px; height: 40px; display: flex; align-items: center; justify-content: center; position: relative; }
.g2 { margin-left: 1px; }
.run::after { content: ""; position: absolute; left: 4px; bottom: 0; width: 40px; height: 2px; background: #76b9ed; }
.cur { background: #4b4b4b; width: 48px; margin-left: 1px; }
.cur::after { left: 0; width: 48px; }
.tray { display: flex; align-items: center; margin-left: 292px; font-size: 13.4px; position: relative; }
.wxn { position: absolute; left: 17px; top: 8px; font-size: 9px; line-height: 12px; }
.temp { margin-left: 8px; width: 37px; } .smoke { width: 65px; }
.clock { width: 74px; font-size: 11.2px; line-height: 18px; text-align: center; margin-left: -3px; letter-spacing: -.1px; }
.notif { position: relative; margin: 8px 0 0 7px; }
.notif span { position: absolute; left: 12px; top: 9px; font-size: 11px; line-height: 14px; }
.tray::after { content: ""; width: 1px; height: 40px; margin-left: 11px; background: #777; }
```
